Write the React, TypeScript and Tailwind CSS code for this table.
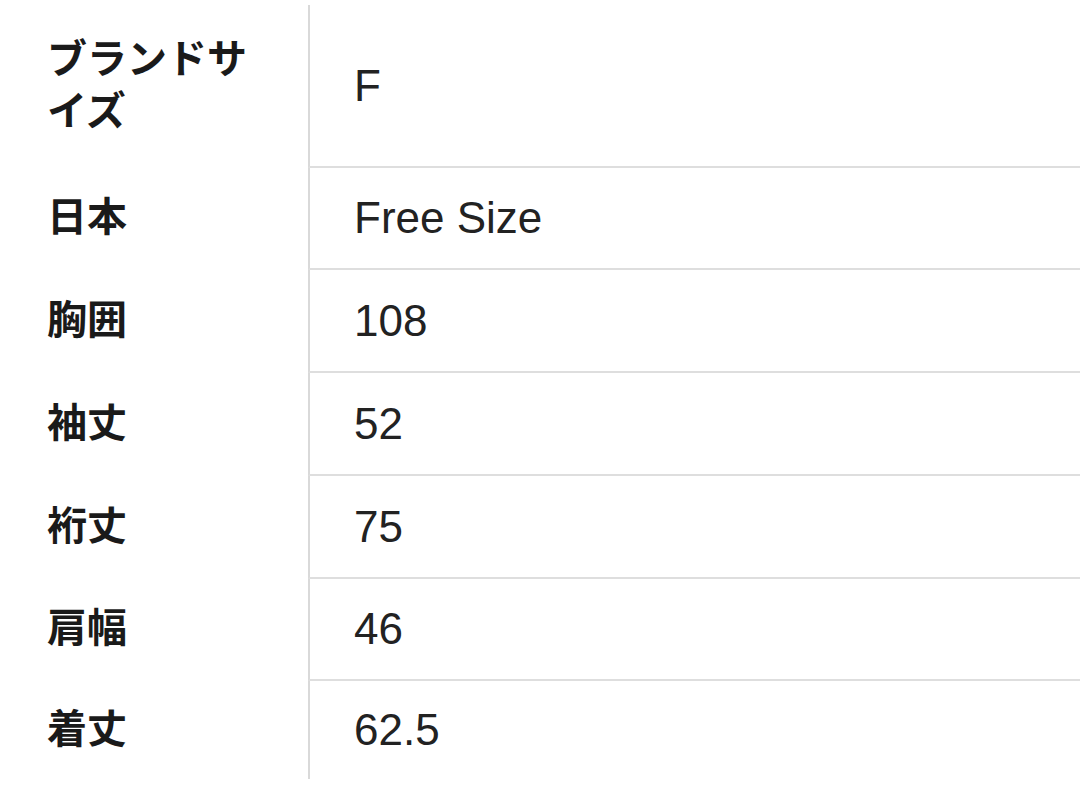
const rows = [
  { label: "ブランドサイズ", value: "F", h: "h-[163px]" },
  { label: "日本", value: "Free Size", h: "h-[102px]" },
  { label: "胸囲", value: "108", h: "h-[103px]" },
  { label: "袖丈", value: "52", h: "h-[103px]" },
  { label: "裄丈", value: "75", h: "h-[103px]" },
  { label: "肩幅", value: "46", h: "h-[102px]" },
  { label: "着丈", value: "62.5", h: "h-[98px]" },
];

export default function App() {
  return (
    <div className="h-[809px] w-[1080px] overflow-hidden bg-white pt-[5px]">
      <div className="flex flex-col">
        {rows.map((row, i) => {
          const last = i === rows.length - 1;
          return (
            <div key={row.label} className={`flex ${row.h}`}>
              <div
                className={`flex w-[308px] shrink-0 items-center pl-[47px] pr-[47px] ${
                  last ? "pb-[8px]" : "pb-[10px]"
                }`}
              >
                <span
                  className="text-[40px] font-bold leading-[52px] text-[#1a1a1a]"
                  style={{ fontFamily: '"Noto Sans CJK JP", sans-serif' }}
                >
                  {row.label}
                </span>
              </div>
              <div
                className={`flex flex-1 items-center border-l-2 border-l-[#d9d9d9] pl-[44px] ${
                  last ? "" : "border-b-2 border-b-[#dedede]"
                }`}
              >
                <span className="font-['Liberation_Sans',Arial,sans-serif] text-[44px] leading-none text-[#222]">
                  {row.value}
                </span>
              </div>
            </div>
          );
        })}
      </div>
    </div>
  );
}
